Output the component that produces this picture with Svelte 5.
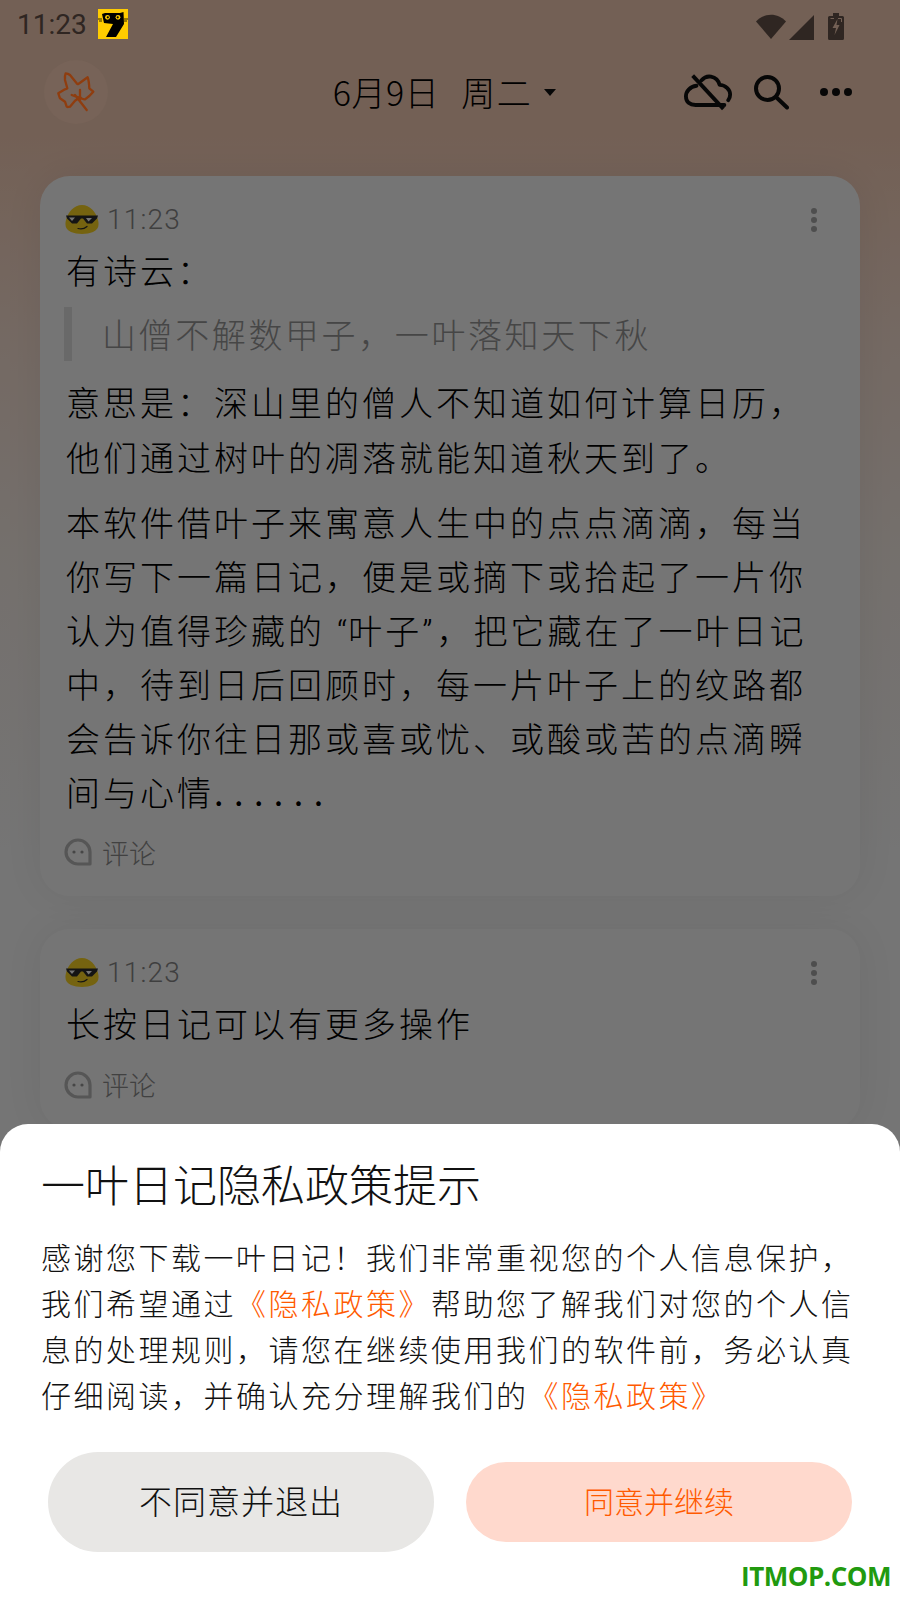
<script>
  const para = [
    '本软件借叶子来寓意人生中的点点滴滴，每当',
    '你写下一篇日记，便是或摘下或拾起了一片你'
  ];
  const para2 = [
    '中，待到日后回顾时，每一片叶子上的纹路都',
    '会告诉你往日那或喜或忧、或酸或苦的点滴瞬'
  ];
</script>

<div class="page">
  <div class="status">
    <span class="clock">11:23</span>
    <div class="status-icons">
      <svg width="30" height="26" viewBox="0 0 30 26"><path d="M0 7.500C8-1.500 22-1.500 30 7.500L15 25Z" fill="#66534a"/></svg>
      <svg width="25" height="25" viewBox="0 0 25 25"><path d="M25 0V25H0Z" fill="#66534a"/></svg>
      <svg class="batt" width="16" height="27" viewBox="0 0 16 27"><path d="M5 0h6v3h3.500q1.500 0 1.500 1.500V25.500q0 1.500-1.500 1.500H1.500Q0 27 0 25.500V4.500Q0 3 1.500 3H5Z" fill="#66534a"/><path d="M9.500 6 4.500 15H8l-1.500 7 5-10H8.500Z" fill="#fbd1b9"/><path d="M2.500 5.500H6M10 5.500h3.500V9" stroke="#fbd1b9" stroke-width="1" fill="none"/></svg>
    </div>
  </div>

  <header class="topbar">
    <div class="avatar">
      <svg width="60" height="60" viewBox="0 0 60 60" fill="none" stroke="#8f3d0f" stroke-width="2.300" stroke-linejoin="round" stroke-linecap="round">
        <path d="M19.700 11.300Q22 11.500 24 13L30.700 21.300Q31.500 22.500 32.300 22L41.700 15.300Q43 19 43.300 26.300L47.300 29.700L43.300 34L39 37.300Q36 37.500 34 35.300L29 38.700L24 44.700Q21 45.500 20.700 44.700L19 39.700L14 36.300L12.300 31.300L19 27.300Q21 27 21.300 26.300L19 18Q18.500 14 19.700 11.300Z"/>
        <path d="M40.700 48 29 33M25.700 33 32.300 35.300M34 28V38"/>
      </svg>
    </div>
    <div class="date">
      <span class="d1">6月9日</span>
      <span class="d2">周二</span>
      <svg class="tri" width="12" height="7" viewBox="0 0 12 7"><path d="M0 0H12L6 7Z" fill="#111"/></svg>
    </div>
    <div class="actions">
      <svg width="50" height="37" viewBox="0 0 52 38" fill="none" stroke="#111" stroke-width="4" stroke-linecap="round" stroke-linejoin="round">
        <path d="M13 12C6 13 2 18 2 23C2 29 6 32 12 32H42"/>
        <path d="M18 6.500C21 3 25 2 28 2.500C33 3.500 36 7 37 11C43 11 48 16 48 21C48 24 47 25.500 46 27"/>
        <path d="M9 1.500 41 36" stroke-linecap="butt"/>
      </svg>
      <svg width="36" height="36" viewBox="0 0 36 36" fill="none" stroke="#111" stroke-width="4" stroke-linecap="round"><circle cx="14.500" cy="14.500" r="11.500"/><path d="M23 23 34 33.500"/></svg>
      <svg width="32" height="8" viewBox="0 0 32 8" fill="#111"><circle cx="4" cy="4" r="4"/><circle cx="16" cy="4" r="4"/><circle cx="28" cy="4" r="4"/></svg>
    </div>
  </header>

  <main class="list">
    <article class="card first">
      <div class="meta">
        {@render cool()}
        <span class="time">11:23</span>
        {@render kebab()}
      </div>
      <p class="line">有诗云：</p>
      <blockquote class="line">山僧不解数甲子，一叶落知天下秋</blockquote>
      <p class="line p2">意思是：深山里的僧人不知道如何计算日历，<br />他们通过树叶的凋落就能知道秋天到了。</p>
      <p class="line p3">{#each para as l}{l}<br />{/each}认为值得珍藏的<span class="ql">“</span>叶子<span class="qr">”</span>，把它藏在了一叶日记<br />{#each para2 as l}{l}<br />{/each}间与心情<span class="dots">......</span></p>
      {@render comment()}
    </article>
    <article class="card">
      <div class="meta">
        {@render cool()}
        <span class="time">11:23</span>
        {@render kebab()}
      </div>
      <p class="line">长按日记可以有更多操作</p>
      {@render comment()}
    </article>
  </main>

  <div class="scrim"></div>

  <svg class="cat" width="30" height="30" viewBox="0 0 30 30">
    <rect width="30" height="30" fill="#ffcc00"/>
    <path d="M4 5L7 4H22L25.500 3L26 15L18 28H8L15 15L6 14Z" fill="#000"/>
    <circle cx="9.500" cy="8.300" r="2.400" fill="#ffcc00"/><circle cx="20" cy="8.300" r="2.400" fill="#ffcc00"/>
    <circle cx="9.800" cy="8.300" r="1.100" fill="#000"/><circle cx="19.700" cy="8.300" r="1.100" fill="#000"/>
    <path d="M0 10H4M26 10H30M1 12H4M26 12H29" stroke="#000" stroke-width=".8"/>
  </svg>

  <section class="dialog">
    <h1>一叶日记隐私政策提示</h1>
    <p class="body">感谢您下载一叶日记！我们非常重视您的个人信息保护，<br />我们希望通过<em>《隐私政策》</em>帮助您了解我们对您的个人信<br />息的处理规则，请您在继续使用我们的软件前，务必认真<br />仔细阅读，并确认充分理解我们的<em>《隐私政策》</em></p>
    <div class="buttons">
      <button class="no">不同意并退出</button>
      <button class="yes">同意并继续</button>
    </div>
  </section>

  <div class="mark">ITMOP.COM</div>
</div>

{#snippet cool()}
  <svg class="cool" width="34" height="30" viewBox="0 0 34 30">
    <path d="M17 0C25 0 31 7 33 15C34.500 21 33 25 28 27C22 29.500 12 29.500 6 27C1 25 -.5 21 1 15C3 7 9 0 17 0Z" fill="#ffd823"/>
    <path d="M1 10.500 33 10.500 32 13.500 27 18.500H22L18 13.500H16L12 18.500H7L2 13.500Z" fill="#2c2c2c"/>
    <path d="M4 12.500H10L7 16ZM21 13H27L23.500 16.500Z" fill="#fff"/>
    <path d="M13 23.500Q18 25 22 21.500" stroke="#2c2c2c" stroke-width="1.200" fill="none" stroke-linecap="round"/>
  </svg>
{/snippet}

{#snippet kebab()}
  <svg class="kebab" width="6" height="24" viewBox="0 0 6 24" fill="#aaa"><circle cx="3" cy="3" r="3"/><circle cx="3" cy="12" r="3"/><circle cx="3" cy="21" r="3"/></svg>
{/snippet}

{#snippet comment()}
  <div class="comment">
    <svg width="28" height="28" viewBox="0 0 28 28"><path d="M14 2A12 12 0 0 0 14 26H26V14A12 12 0 0 0 14 2Z" fill="none" stroke="#bbb" stroke-width="3.200" stroke-linejoin="round"/><circle cx="10" cy="14" r="1.600" fill="#999"/><circle cx="18" cy="14" r="1.600" fill="#999"/></svg>
    <span>评论</span>
  </div>
{/snippet}

<style>
  :global(body) { margin: 0; }
  .page {
    position: relative;
    width: 900px;
    height: 1600px;
    overflow: hidden;
    font-family: "Noto Sans CJK SC", "Noto Sans", sans-serif;
    font-weight: 300;
    color: #222;
    background: linear-gradient(#fbd1b9 0, #fbd1b9 130px, #fde4d6 330px, #fdf3ec 550px, #fefefe 850px);
  }
  .status {
    height: 50px;
    display: flex;
    align-items: center;
    justify-content: space-between;
    padding: 0 56px 0 17px;
  }
  .clock {
    font: 400 28px/50px Roboto, sans-serif;
    color: #66534a;
  }
  .status-icons { display: flex; align-items: flex-start; gap: 3px; margin-top: 2px; }
  .status-icons svg { display: block; }
  .status-icons svg:first-child { margin-top: 1px; }
  .status-icons svg:nth-child(2) { margin-top: 2px; }
  .status-icons .batt { margin-left: 11px; }

  .topbar {
    height: 84px;
    display: flex;
    align-items: center;
    justify-content: space-between;
    padding: 0 48px 0 44px;
  }
  .avatar {
    position: relative;
    z-index: 2;
    width: 64px;
    height: 64px;
    border-radius: 50%;
    background: #776358;
    display: flex;
    align-items: center;
    justify-content: center;
  }
  .date {
    display: flex;
    align-items: center;
    margin-left: 97px;
    color: #000;
    font-size: 34px;
    line-height: 44px;
  }
  .d1 { letter-spacing: .5px; margin-right: 22px; }
  .d2 { letter-spacing: 1.500px; }
  .tri { margin-left: 12px; }
  .actions { display: flex; align-items: center; gap: 19px; }
  .actions svg:last-child { margin-left: 12px; }

  .list {
    padding: 42px 40px 0;
    display: flex;
    flex-direction: column;
    gap: 33px;
  }
  .card {
    background: #fff;
    border-radius: 30px;
    padding: 18px 26px 25px;
    box-shadow: 0 0 40px rgba(0, 0, 0, .06);
  }
  .meta {
    height: 52px;
    margin-bottom: -3px;
    display: flex;
    align-items: center;
  }
  .cool { flex: none; margin-left: -1px; }
  .time {
    margin-left: 8px;
    font: 300 28px/52px Roboto, sans-serif;
    letter-spacing: 1.200px;
    color: #8a8a8a;
  }
  .kebab { margin-left: auto; margin-right: 17px; }
  .line {
    margin: 0;
    font-size: 34px;
    line-height: 54.500px;
    letter-spacing: 3px;
    white-space: nowrap;
    color: #000;
  }
  blockquote.line {
    margin: 9px 0 14px -2px;
    padding-left: 30px;
    letter-spacing: 2.600px;
    border-left: 8px solid #e5e5e5;
    color: #999;
  }
  .p3 { margin-top: 11px; line-height: 54px; }
  .ql, .qr { font-family: Roboto, sans-serif; line-height: 1; }
  .ql { margin-left: 12px; letter-spacing: 1px; }
  .qr { letter-spacing: 4px; }
  .dots { letter-spacing: 10.500px; font-weight: 400; line-height: 1; }
  .comment {
    height: 40px;
    margin-top: 13px;
    display: flex;
    align-items: center;
    gap: 10px;
    margin-left: -2px;
    font-size: 27px;
    color: #8e8e8e;
  }
  .card { padding-bottom: 24px; }
  .card + .card .comment { margin-top: 14px; }
  .comment svg { display: block; }

  .scrim {
    position: absolute;
    inset: 0;
    background: rgba(0, 0, 0, .54);
  }
  .cat { position: absolute; left: 98px; top: 9px; }

  .dialog {
    position: absolute;
    left: 0;
    right: 0;
    bottom: 0;
    height: 476px;
    box-sizing: border-box;
    background: #fff;
    border-radius: 28px 28px 0 0;
    padding: 32px 48px 0 41px;
    display: flex;
    flex-direction: column;
    color: #111;
  }
  h1 {
    margin: 0;
    font-size: 44px;
    line-height: 54px;
    font-weight: 300;
    white-space: nowrap;
  }
  .body {
    margin: 23px 0 0;
    font-size: 30px;
    line-height: 46px;
    letter-spacing: 2.500px;
    white-space: nowrap;
  }
  em { font-style: normal; color: #ff5a00; }
  .buttons {
    margin: 35px 0 0 7px;
    display: flex;
    align-items: center;
    gap: 32px;
  }
  button {
    border: 0;
    padding: 0;
    width: 386px;
    border-radius: 50px;
    font-family: inherit;
    font-weight: 300;
  }
  .no {
    height: 100px;
    padding-bottom: 4px;
    background: #e8e7e5;
    color: #111;
    font-size: 33px;
    letter-spacing: 1px;
  }
  .yes {
    height: 80px;
    padding-bottom: 5px;
    background: #ffd9cd;
    color: #ff5a00;
    font-size: 30px;
  }
  .mark {
    position: absolute;
    right: 9px;
    bottom: 9px;
    font: 700 26px/30px "Open Sans", sans-serif;
    letter-spacing: -.5px;
    color: #219a0f;
  }
</style>
